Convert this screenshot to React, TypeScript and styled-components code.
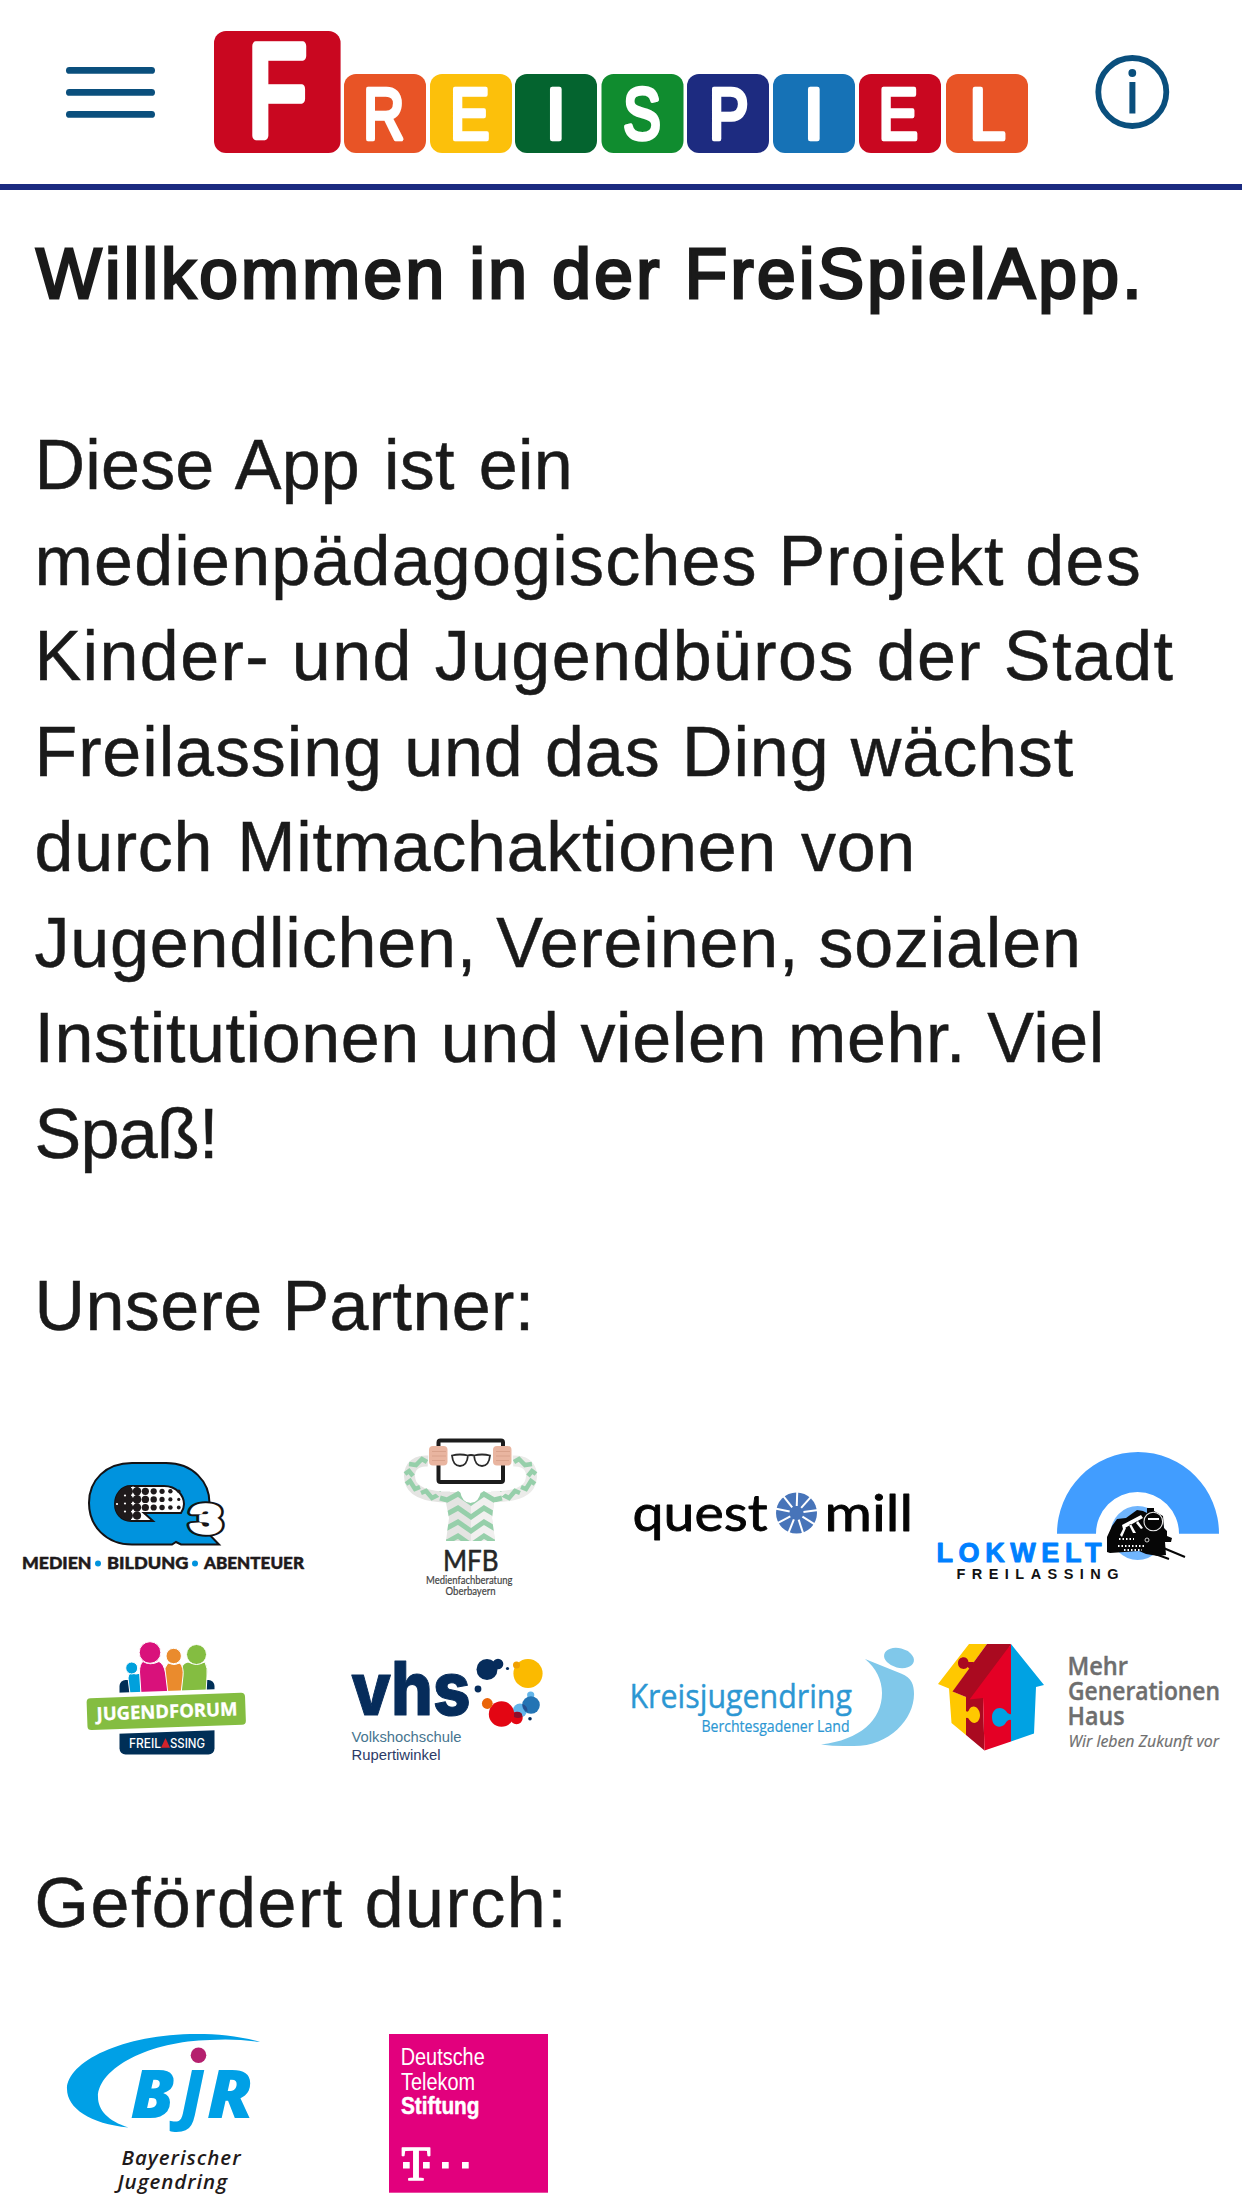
import React from "react";
import styled, { createGlobalStyle } from "styled-components";

const Global = createGlobalStyle`
  body { margin: 0; background: #fff; }
`;

const Page = styled.main`
  width: 1242px;
  height: 2208px;
  overflow: hidden;
  background: #fff;
  color: #1a1a1a;
  font-family: "Liberation Sans", Arial, sans-serif;
`;

const Header = styled.header`
  box-sizing: border-box;
  height: 190px;
  border-bottom: 6px solid #1b2a80;
  display: flex;
  align-items: stretch;
  padding-left: 62px;
`;

const IconButton = styled.button<{ $width: number }>`
  border: 0;
  padding: 0;
  background: none;
  width: ${(p) => p.$width}px;
  flex: none;
  display: flex;
`;

const Brand = styled.div`
  flex: none;
  margin: 0 62px 0 50px;
  display: flex;
`;

const Title = styled.h1`
  margin: 36px 0 0 36px;
  height: 96px;
  line-height: 96px;
  font-size: 69.5px;
  font-weight: 400;
  letter-spacing: 3.3px;
  word-spacing: -0.5px;
  white-space: nowrap;
  -webkit-text-stroke: 2.8px #1a1a1a;
`;

const Text = styled.p<{ $top: number }>`
  margin: ${(p) => p.$top}px 0 0 34.5px;
  font-size: 70px;
  line-height: 95.5px;
  white-space: nowrap;
  -webkit-text-stroke: 0.5px #1a1a1a;
`;

const Line = styled.span<{ $tracking: number; $gap?: number }>`
  display: block;
  letter-spacing: ${(p) => p.$tracking}px;
  word-spacing: ${(p) => p.$gap ?? 0}px;
`;

const LogoGrid = styled.div<{ $top: number }>`
  display: grid;
  grid-template-columns: repeat(4, 305px);
  margin: ${(p) => p.$top}px 0 0 11px;
`;

const LogoCell = styled.a`
  display: flex;
  color: inherit;
`;

const INTRO: [string, number, number][] = [
  ["Diese App ist ein", 0.2, 4.5],
  ["medienpädagogisches Projekt des", 1.2, 0],
  ["Kinder- und Jugendbüros der Stadt", 1.4, 1],
  ["Freilassing und das Ding wächst", 0.9, 1],
  ["durch Mitmachaktionen von", 0.7, 4],
  ["Jugendlichen, Vereinen, sozialen", 0.8, -1],
  ["Institutionen und vielen mehr. Viel", 0.6, 1],
  ["Spaß!", -0.7, 0],
];

type LabelProps = {
  x: number;
  y: number;
  w: number;
  size: number;
  fill?: string;
  font?: string;
  weight?: number;
  italic?: boolean;
  spaced?: boolean;
  stroke?: number;
  strokeColor?: string;
  children: string;
};

function Label({ x, y, w, size, fill = "#1a1a1a", font = "Liberation Sans", weight = 400, italic, spaced, stroke, strokeColor, children }: LabelProps) {
  return (
    <text
      x={x}
      y={y}
      textLength={w}
      lengthAdjust={spaced ? "spacing" : "spacingAndGlyphs"}
      fontFamily={`"${font}", sans-serif`}
      fontSize={size}
      fontWeight={weight}
      fontStyle={italic ? "italic" : undefined}
      fill={fill}
      stroke={stroke ? strokeColor ?? fill : undefined}
      strokeWidth={stroke}
      strokeLinejoin="round"
      paintOrder="stroke"
    >
      {children}
    </text>
  );
}

const TILES: [string, number, string, number, number][] = [
  ["R", 344, "#e85426", 363.2, 41],
  ["E", 430, "#fcc00b", 450, 39.5],
  ["I", 515, "#04642f", 545.6, 20.6],
  ["S", 601.5, "#108c2f", 623.2, 37.5],
  ["P", 687, "#1d2b80", 709, 39.5],
  ["I", 773, "#1672b6", 803.6, 20.6],
  ["E", 859, "#c90720", 878.5, 39.5],
  ["L", 946, "#e85426", 969.5, 36],
];

function FreispielLogo() {
  return (
    <svg width="817" height="184" viewBox="212 0 817 184">
      <rect x="214" y="31" width="126.6" height="122" rx="12" fill="#c90720" />
      <Label x={248} y={135} w={58.5} size={129} fill="#fff" stroke={9.5}>F</Label>
      {TILES.map(([letter, x, color, tx, w]) => (
        <g key={x}>
          <rect x={x} y="74" width="82" height="79" rx="12" fill={color} />
          <Label x={tx} y={138.8} w={w} size={72.5} fill="#fff" stroke={4.6}>{letter}</Label>
        </g>
      ))}
    </svg>
  );
}

const DOTS: number[][] = [
  [4.2, 4.3, 4.2, 3.6, 3.1, 2.6, 2.2, 1.8],
  [4.4, 4.6, 4.3, 3.7, 3.2, 2.6, 2.1, 1.6],
  [4.4, 4.5, 4.2, 3.6, 3.1, 2.7, 2.3, 1.9],
  [4.4, 4.3, 4.1],
];

const SPARKS = [
  [125, 1495.5], [125, 1503.5], [125, 1511.5], [133, 1487.5],
  [133, 1495.5], [133, 1503.5], [133, 1511.5], [117, 1504],
];

function Q3Logo() {
  return (
    <svg width="305" height="190" viewBox="11 1420 305 190">
      <path d="M132 1463H166C193 1463 209.500 1482 209.500 1503C209.500 1513 207 1520 202 1527L219 1544.500H181L176 1542L172 1544.500H132C106 1544.500 89 1526 89 1503S106 1463 132 1463Z" fill="#0093de" stroke="#141214" strokeWidth="2" />
      <path d="M131 1486H164C177 1486 184 1496 184 1504Q184 1509 181 1513H144L153 1521H131C121 1521 115 1513 115 1504S121 1486 131 1486Z" fill="#fff" stroke="#141214" strokeWidth="2" />
      <path d="M131 1486C121 1486 115 1495 115 1504S121 1521 131 1521Z" fill="#1f1a1b" />
      {DOTS.map((row, j) =>
        row.map((r, i) => <circle key={`${j}-${i}`} cx={120.3 + i * 8.35} cy={1491.3 + j * 8.1} r={i < 1 ? 1 : r} fill="#1f1a1b" />)
      )}
      {SPARKS.map(([x, y]) => (
        <circle key={`${x}-${y}`} cx={x} cy={y} r="1.1" fill="#fff" />
      ))}
      <Label x={190.5} y={1532.5} w={31} size={40} fill="#141214" weight={700} stroke={7.5}>3</Label>
      <Label x={190.5} y={1532.5} w={31} size={40} fill="#fff" weight={700} stroke={3.6}>3</Label>
      <Label x={22} y={1568.7} w={69.5} size={17} fill="#1f1a1b" weight={900} font="Lato" stroke={0.5}>MEDIEN</Label>
      <circle cx="98" cy="1563.5" r="3" fill="#0093de" />
      <Label x={107} y={1568.7} w={81.5} size={17} fill="#1f1a1b" weight={900} font="Lato" stroke={0.5}>BILDUNG</Label>
      <circle cx="195" cy="1563.5" r="3" fill="#0093de" />
      <Label x={204} y={1568.7} w={100} size={17} fill="#1f1a1b" weight={900} font="Lato" stroke={0.5}>ABENTEUER</Label>
    </svg>
  );
}

function MfbLogo() {
  return (
    <svg width="305" height="190" viewBox="316 1420 305 190">
      <clipPath id="torso"><path d="M434 1491H460Q462 1503 470.500 1503T481 1491H507V1502H494L492 1518L495 1541H446L449 1518L446 1502H434Z" /></clipPath>
      <g fill="none">
        <path d="M428 1461C412 1460 408 1471 410 1480C412 1492 428 1497 450 1497" stroke="#e4e4e2" strokeWidth="11" />
        <path d="M513 1461C529 1460 533 1471 531 1480C529 1492 513 1497 491 1497" stroke="#ebebe9" strokeWidth="11" />
        <path d="M427 1462L422 1459L416 1465L409 1464M405 1474L409 1471L413 1476M406 1484L410 1481L415 1489L420 1487M421 1493L426 1491L432 1498L440 1494L448 1501" stroke="#96cfaa" strokeWidth="4.500" />
        <path d="M514 1462L519 1459L525 1465L532 1464M536 1474L532 1471L528 1476M535 1484L531 1481L526 1489L521 1487M520 1493L515 1491L509 1498L501 1494L493 1501" stroke="#96cfaa" strokeWidth="4.500" />
      </g>
      <path d="M434 1492H460Q462 1503 470.500 1503T481 1492H507L494 1503L492 1518L495 1541H446L449 1518L446 1503Z" fill="#e4e4e2" />
      <path d="M471 1503Q479 1502 481 1492H507L494 1503L492 1518L495 1541H471Z" fill="#f1f0ef" />
      <g clipPath="url(#torso)" fill="none" stroke="#96cfaa" strokeWidth="5">
        {[1498, 1512, 1526, 1540].map((y) => (
          <path key={y} d={`M440 ${y}L447 ${y + 2}L458 ${y - 4}L471 ${y + 5}L484 ${y - 4}L494 ${y + 2}L502 ${y}`} />
        ))}
      </g>
      <rect x="438.5" y="1440.5" width="64.5" height="41.5" rx="2" fill="#fff" stroke="#1c1c1c" strokeWidth="4" />
      <path d="M452 1455.500Q460 1453.500 468 1455.500Q467 1466 460 1466Q453 1466 452 1455.500ZM474 1455.500Q482 1453.500 490 1455.500Q489 1466 482 1466Q475 1466 474 1455.500ZM467 1456Q471 1454 475 1456" fill="none" stroke="#2a2a2a" strokeWidth="1.800" />
      {[429, 493].map((x) => (
        <g key={x}>
          <rect x={x} y="1446" width="18.5" height="19.5" rx="4" fill="#e9b5a0" />
          <path d={`M${x + 3} 1451.500H${x + 17}M${x + 3} 1456H${x + 17}M${x + 3} 1460.500H${x + 16}`} stroke="#d9a28c" strokeWidth="1" />
        </g>
      ))}
      <Label x={443} y={1570.7} w={55.5} size={29.5} fill="#262626" font="Lato" stroke={0.6}>MFB</Label>
      <Label x={426} y={1584.3} w={86.5} size={11.5} fill="#444" font="Lato" stroke={0.2}>Medienfachberatung</Label>
      <Label x={445.5} y={1594.8} w={50} size={11} fill="#444" font="Lato" stroke={0.2}>Oberbayern</Label>
    </svg>
  );
}

function QuestMillLogo() {
  return (
    <svg width="305" height="190" viewBox="621 1420 305 190">
      <Label x={632.5} y={1530.5} w={135} size={49.5} fill="#050505" font="Lato" stroke={0.8}>quest</Label>
      <circle cx="796.5" cy="1513" r="20.5" fill="#4774b9" />
      <g stroke="#fff" strokeWidth="2">
        {Array.from({ length: 9 }, (_, i) => (
          <path key={i} d="M796.500 1506L796.500 1491" transform={`rotate(${i * 40 + 2} 796.5 1513)`} />
        ))}
      </g>
      <Label x={824.5} y={1530.5} w={88.5} size={49.5} fill="#050505" font="Lato" stroke={0.8}>mill</Label>
    </svg>
  );
}

function LokweltLogo() {
  return (
    <svg width="305" height="190" viewBox="926 1420 305 190">
      <path d="M1057 1533.700A81 81.700 0 0 1 1219 1533.700H1179A41.500 41.700 0 0 0 1096 1533.700Z" fill="#419dff" />
      <circle cx="1137.7" cy="1533" r="27" fill="#70b5fd" />
      <path d="M1107 1552V1537L1112 1526L1117 1519L1126 1518L1137 1510L1143 1511L1147 1513V1508H1154V1511L1163 1516L1164 1528L1167 1531V1536L1172 1538L1171 1542L1165 1542L1166 1555L1158 1556L1146 1554L1139 1551L1110 1553Z" fill="#060606" />
      <path d="M1144 1550L1169 1559M1161 1547L1185 1557" stroke="#060606" strokeWidth="2" />
      <circle cx="1153.3" cy="1521.5" r="9.3" fill="#060606" stroke="#e9e9e9" strokeWidth="1.1" />
      <path d="M1148 1519H1159" stroke="#fff" strokeWidth="2" />
      <path d="M1122 1525L1141 1515L1143 1518L1123 1529ZM1120 1535L1124 1527L1126 1528L1122 1537ZM1129 1525L1133 1533L1136 1533L1131 1524ZM1136 1523L1141 1529L1143 1528L1138 1521Z" fill="#fff" />
      <path d="M1119 1539H1134M1118 1546H1144M1124 1550H1142" stroke="#fff" strokeWidth="2" strokeDasharray="1.500 2" />
      <circle cx="1147" cy="1540" r="2" fill="none" stroke="#fff" strokeWidth=".8" />
      <Label x={936.5} y={1561.8} w={165} size={27} fill="#0080ff" weight={700} stroke={1} spaced>LOKWELT</Label>
      <Label x={956.5} y={1579} w={162} size={14.5} fill="#111" weight={700} spaced>FREILASSING</Label>
    </svg>
  );
}

function JugendforumLogo() {
  return (
    <svg width="305" height="160" viewBox="11 1620 305 160">
      <rect x="119.5" y="1680" width="95" height="74.5" rx="6" fill="#002f57" />
      <g stroke="#fff" strokeWidth="1">
        <path d="M181 1694V1674Q181 1663 188 1662Q196 1666 205 1662Q208 1668 207 1676L206 1694Z" fill="#84bd41" />
        <circle cx="196.5" cy="1654.5" r="10" fill="#84bd41" />
        <path d="M165 1694V1668L168 1663Q174 1666 180 1663Q184 1668 183 1676L181 1694Z" fill="#ea8b2d" />
        <circle cx="173.7" cy="1656" r="7.7" fill="#ea8b2d" />
        <path d="M130 1694L128 1678Q128 1674 131 1673Q136 1675 141 1673V1694Z" fill="#00a0dc" />
        <circle cx="131.7" cy="1668" r="6" fill="#00a0dc" />
        <path d="M141 1694L139.500 1672Q139.500 1664 143 1661.500Q150 1666 159 1661.500Q164 1664 165.500 1673L168 1694Z" fill="#d9117b" />
        <circle cx="150" cy="1652.5" r="10.8" fill="#d9117b" />
      </g>
      <g transform="rotate(-2 166 1711.5)">
        <rect x="82" y="1691" width="168" height="41" fill="#fff" />
        <rect x="87" y="1695.5" width="158.5" height="32" rx="4" fill="#84bd41" />
        <Label x={96.5} y={1718} w={141} size={18.5} fill="#fff" weight={700} font="Open Sans" stroke={0.3}>JUGENDFORUM</Label>
      </g>
      <Label x={129} y={1747.7} w={32} size={12.5} fill="#fff" font="Inter" weight={500}>FREIL</Label>
      <path d="M165.500 1738L170 1747.700H161Z" fill="#d3232b" />
      <Label x={170} y={1747.7} w={35} size={12.5} fill="#fff" font="Inter" weight={500}>SSING</Label>
    </svg>
  );
}

const BUBBLES: [number, number, number, string][] = [
  [487, 1669.5, 10.5, "#062c5b"],
  [498, 1664, 5.3, "#062c5b"],
  [507.5, 1668.5, 1.6, "#062c5b"],
  [478, 1689, 3.4, "#062c5b"],
  [528, 1673.5, 14.6, "#fbba00"],
  [516.5, 1665, 3.5, "#f0a000"],
  [520, 1710.5, 7, "#62b5ea"],
  [530.7, 1695, 3.6, "#62b5ea"],
  [531, 1705, 8.8, "#2474b4"],
  [501.5, 1714, 12.7, "#e30613"],
  [516.5, 1718, 6.2, "#e30613"],
  [487.3, 1703.5, 5.4, "#ea6408"],
  [530, 1718.7, 1.8, "#062c5b"],
];

function VhsLogo() {
  return (
    <svg width="305" height="160" viewBox="316 1620 305 160">
      <Label x={351} y={1714.7} w={119.5} size={74} fill="#062c5b" weight={800} font="Inter" stroke={1}>vhs</Label>
      {BUBBLES.map(([x, y, r, c]) => <circle key={`${x}`} cx={x} cy={y} r={r} fill={c} />)}
      <path d="M514 1713Q519 1710 522 1714V1717Q518 1719 514 1717Z" fill="#8c0e2b" />
      <path d="M522.500 1704Q528 1706 527.500 1712Q522 1709 522.500 1704Z" fill="#26508f" />
      <Label x={351.5} y={1742} w={110} size={15.5} fill="#46758f">Volkshochschule</Label>
      <Label x={351.5} y={1760} w={89} size={15.5} fill="#2c3a66">Rupertiwinkel</Label>
    </svg>
  );
}

function KreisjugendringLogo() {
  return (
    <svg width="305" height="160" viewBox="621 1620 305 160">
      <Label x={629.5} y={1707.7} w={222.5} size={33.5} fill="#2c97d3" font="Open Sans" stroke={0.4}>Kreisjugendring</Label>
      <Label x={701.5} y={1732} w={148} size={16} fill="#2c97d3" font="Open Sans" stroke={0.2}>Berchtesgadener Land</Label>
      <ellipse cx="899" cy="1658" rx="15.2" ry="9.7" transform="rotate(14 899 1658)" fill="#80c8ea" />
      <path d="M865 1659L901 1673.500C912 1678 914 1685 914 1694C914 1720 888 1748 850 1746Q835 1746.500 821 1744.500C860 1740 882 1720 882 1693C882 1680 876 1668 865 1659Z" fill="#80c8ea" />
    </svg>
  );
}

function MehrGenerationenHausLogo() {
  return (
    <svg width="305" height="160" viewBox="926 1620 305 160">
      <path d="M969 1644H987L953 1691.500L966 1697V1735L951.500 1723L949 1688.500L938 1684Z" fill="#ffc800" />
      <path d="M987 1644H1011L983 1699L984.500 1750.500L966 1735V1697L952.500 1691.500Z" fill="#aa0a20" />
      <path d="M1011 1644V1741.500L984.500 1750.500L983 1698L969.500 1699.500Z" fill="#e40025" />
      <path d="M1011 1644L1044 1685L1036 1687L1034 1733.500L1011 1741.500Z" fill="#00a2e3" />
      <path d="M974 1662L968.500 1662C968 1655 958 1656 958 1663C958 1670 966 1670 967.500 1667L971 1670Z" fill="#aa0a20" />
      <path d="M966 1711Q968 1713 969.500 1709C974 1703 980 1709 980 1715C980 1722 974 1726 969.500 1720Q968 1717 966 1718Z" fill="#ffc800" />
      <path d="M1011 1714Q1008 1715 1006 1711C1001 1705 992 1708 992 1717C992 1727 1000 1729 1005 1724Q1008 1719 1011 1720Z" fill="#00a2e3" />
      <Label x={1067.5} y={1675} w={60.5} size={24.8} fill="#6e6e6e" font="Open Sans" weight={600} stroke={0.4}>Mehr</Label>
      <Label x={1068} y={1699.8} w={152} size={24.8} fill="#6e6e6e" font="Open Sans" weight={600} stroke={0.4}>Generationen</Label>
      <Label x={1067.5} y={1724.5} w={57} size={24.8} fill="#6e6e6e" font="Open Sans" weight={600} stroke={0.4}>Haus</Label>
      <Label x={1068.5} y={1747.3} w={150.5} size={16} fill="#6e6e6e" font="Open Sans" weight={500} italic stroke={0.2}>Wir leben Zukunft vor</Label>
    </svg>
  );
}

function BjrLogo() {
  return (
    <svg width="305" height="188" viewBox="11 2020 305 188">
      <path d="M260 2042C240 2036 218 2034 197 2034C122 2034 67 2062 67 2089C67 2108 90 2124 128.500 2127.500C108 2121 98 2110 98 2097C98 2068 150 2041 210 2040Q236 2038.500 260 2042Z" fill="#00a0e6" />
      <circle cx="198.5" cy="2055.3" r="7.8" fill="#b5206e" />
      <Label x={130.5} y={2118} w={44} size={67} fill="#00a0e6" font="Open Sans" weight={800} italic>B</Label>
      <Label x={180} y={2117} w={24} size={66} fill="#00a0e6" font="Open Sans" weight={800} italic>J</Label>
      <Label x={207} y={2118} w={46} size={67} fill="#00a0e6" font="Open Sans" weight={800} italic>R</Label>
      <Label x={121.5} y={2164.7} w={119} size={20.5} fill="#1f1a1a" font="Open Sans" weight={600} italic spaced>Bayerischer</Label>
      <Label x={117.5} y={2188.5} w={109.5} size={20.5} fill="#1f1a1a" font="Open Sans" weight={600} italic spaced>Jugendring</Label>
    </svg>
  );
}

function TelekomStiftungLogo() {
  return (
    <svg width="305" height="188" viewBox="316 2020 305 188">
      <rect x="389" y="2034" width="159" height="158.7" fill="#e2007d" />
      <Label x={400.7} y={2064.5} w={84} size={23.5} fill="#fff">Deutsche</Label>
      <Label x={401} y={2089.5} w={74} size={23.5} fill="#fff">Telekom</Label>
      <Label x={401} y={2114} w={78.5} size={23.5} fill="#fff" weight={700} stroke={0.5}>Stiftung</Label>
      <Label x={401.5} y={2179.5} w={29} size={49} fill="#fff" font="Liberation Serif" stroke={1.4}>T</Label>
      {[403, 423, 442, 462].map((x) => <rect key={x} x={x} y="2162" width="6.7" height="6.5" fill="#fff" />)}
    </svg>
  );
}

export default function App() {
  return (
    <Page>
      <Global />
      <Header>
        <IconButton $width={100} aria-label="Menü">
          <svg width="100" height="184" viewBox="62 0 100 184" fill="#0a4f7d">
            {[67, 89, 111].map((y) => <rect key={y} x="66" y={y} width="89" height="6.8" rx="3.4" />)}
          </svg>
        </IconButton>
        <Brand><FreispielLogo /></Brand>
        <IconButton $width={84} aria-label="Info">
          <svg width="84" height="184" viewBox="1091 0 84 184">
            <circle cx="1132.3" cy="92" r="34" fill="none" stroke="#0a4f7d" strokeWidth="5.8" />
            <circle cx="1132.3" cy="73" r="3.9" fill="#0a4f7d" />
            <rect x="1129.4" y="82" width="6" height="31.5" fill="#0a4f7d" />
          </svg>
        </IconButton>
      </Header>
      <Title>Willkommen in der FreiSpielApp.</Title>
      <Text $top={96}>
        {INTRO.map(([text, tracking, gap]) => (
          <Line key={text} $tracking={tracking} $gap={gap}>{text}</Line>
        ))}
      </Text>
      <Text $top={77}><Line $tracking={0.4}>Unsere Partner:</Line></Text>
      <LogoGrid $top={65}>
        <LogoCell><Q3Logo /></LogoCell>
        <LogoCell><MfbLogo /></LogoCell>
        <LogoCell><QuestMillLogo /></LogoCell>
        <LogoCell><LokweltLogo /></LogoCell>
      </LogoGrid>
      <LogoGrid $top={10}>
        <LogoCell><JugendforumLogo /></LogoCell>
        <LogoCell><VhsLogo /></LogoCell>
        <LogoCell><KreisjugendringLogo /></LogoCell>
        <LogoCell><MehrGenerationenHausLogo /></LogoCell>
      </LogoGrid>
      <Text $top={76}><Line $tracking={1.5}>Gefördert durch:</Line></Text>
      <LogoGrid $top={69}>
        <LogoCell><BjrLogo /></LogoCell>
        <LogoCell><TelekomStiftungLogo /></LogoCell>
      </LogoGrid>
    </Page>
  );
}
